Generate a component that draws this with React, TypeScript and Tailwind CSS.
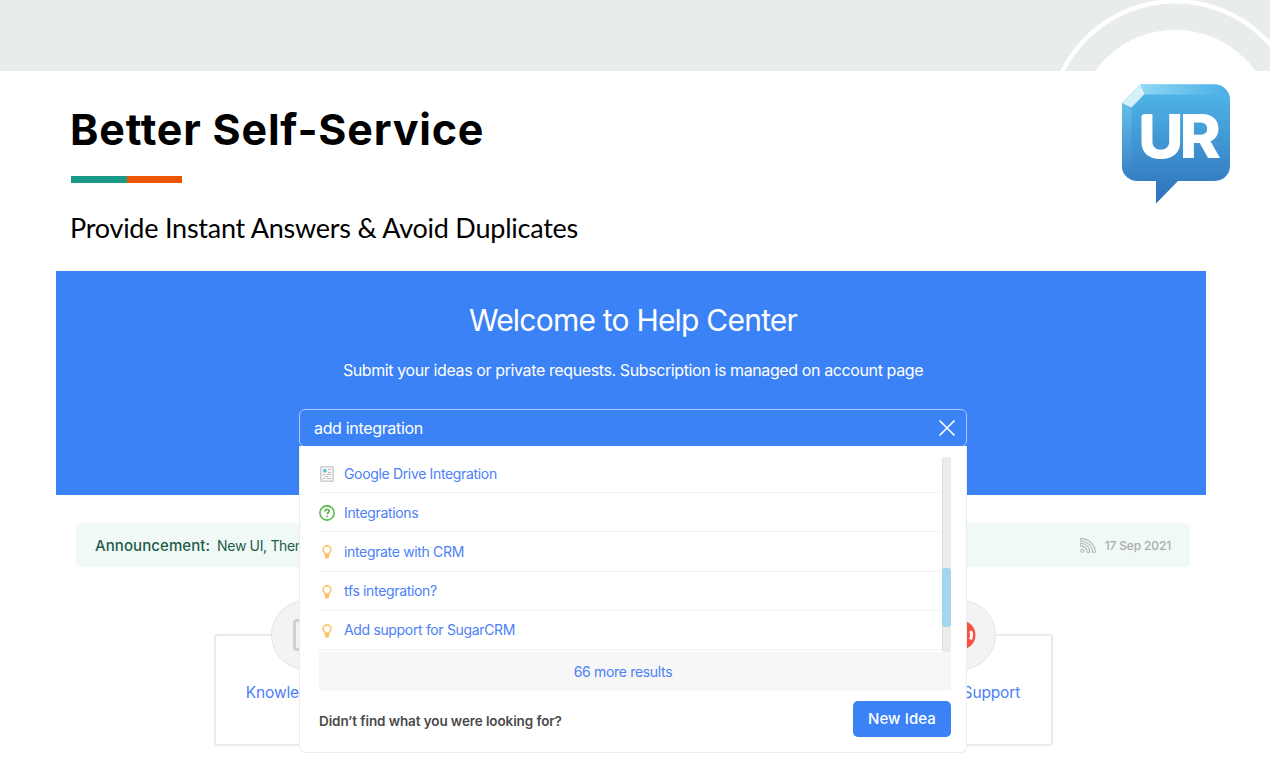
import React from 'react';

type ResultKind = 'article' | 'question' | 'idea';

interface Result {
    kind: ResultKind;
    title: string;
}

const results: Result[] = [
    { kind: 'article', title: 'Google Drive Integration' },
    { kind: 'question', title: 'Integrations' },
    { kind: 'idea', title: 'integrate with CRM' },
    { kind: 'idea', title: 'tfs integration?' },
    { kind: 'idea', title: 'Add support for SugarCRM' },
];

const ArticleIcon: React.FC<{ className?: string }> = ({ className }) => (
    <svg viewBox="0 0 14 16" className={className} fill="none">
        <rect x="0.8" y="0.8" width="12.4" height="14.4" rx="1" fill="#f4f4f4" stroke="#cfcfcf" strokeWidth="1.6" />
        <circle cx="4.9" cy="4.8" r="1.7" fill="#4db1e2" />
        <path d="M8 3.5h3M8 6.5h3M3 8.5h2M7 8.5h4M5 10.5h3M3 12.5h2M7 12.5h4" stroke="#c0c0c0" strokeWidth="1" />
    </svg>
);

const QuestionIcon: React.FC<{ className?: string }> = ({ className }) => (
    <svg viewBox="0 0 16 16" className={className} fill="none" stroke="#55b94c">
        <circle cx="8" cy="8" r="7.1" strokeWidth="1.6" />
        <path d="M5.9 6.4c0-1.3.9-2 2.1-2s2.1.8 2.1 1.8c0 1.5-1.9 1.5-1.9 3.1" strokeWidth="1.8" />
        <circle cx="8.1" cy="11.3" r="0.5" fill="#55b94c" strokeWidth="1" />
    </svg>
);

const BulbIcon: React.FC<{ className?: string }> = ({ className }) => (
    <svg viewBox="0 0 10 14" className={className} fill="none" stroke="#fcc670">
        <path d="M3.3 9.4C3.2 7.7 1 7.2 1 4.8 1 2.5 2.8.9 5 .9s4 1.6 4 3.9c0 2.4-2.2 2.9-2.3 4.6z" strokeWidth="1.6" />
        <path d="M3 8.8h4v3.4L6.1 13.6H3.9L3 12.2z" fill="#fbbf5c" stroke="none" />
    </svg>
);

const RssIcon: React.FC<{ className?: string }> = ({ className }) => (
    <svg viewBox="0 0 16 15" className={className} fill="none" stroke="#b4bab8" strokeWidth="1.1">
        <circle cx="2.3" cy="12.7" r="1.6" />
        <path d="M.7 7.9V5.2c5.2 0 9.1 3.9 9.1 9.1H7.2C7.2 10.7 4.3 7.9.7 7.9z" />
        <path d="M.7 3.2V.6c7.9 0 14.6 5.8 14.6 13.7h-2.7C12.6 8.1 7.3 3.2.7 3.2z" />
    </svg>
);

const resultIcons: Record<ResultKind, React.ReactNode> = {
    article: <ArticleIcon className="w-[14px] h-4" />,
    question: <QuestionIcon className="w-4 h-4 shrink-0" />,
    idea: <BulbIcon className="w-[10px] h-[14px]" />,
};

const Logo: React.FC = () => (
    <svg viewBox="0 0 110 120" className="w-[110px] h-[120px]">
        <defs>
            <linearGradient id="body" x1="0" y1="0" x2="0" y2="1">
                <stop offset="0" stopColor="#52b9ea" />
                <stop offset="0.8" stopColor="#357fc4" />
                <stop offset="1" stopColor="#2f70b8" />
            </linearGradient>
            <linearGradient id="top" x1="0" y1="0" x2="1" y2="0">
                <stop offset="0" stopColor="#8fd7f3" />
                <stop offset="1" stopColor="#4aaee6" />
            </linearGradient>
            <linearGradient id="side" x1="0" y1="0" x2="0" y2="1">
                <stop offset="0" stopColor="#66bfe8" />
                <stop offset="1" stopColor="#357fc4" />
            </linearGradient>
        </defs>
        <path d="M19.5.5H94a15 15 0 0 1 15 15V82a15 15 0 0 1-15 15H57L35 119.5V97H16.5A15 15 0 0 1 1 82V19z" fill="url(#body)" />
        <path d="M19.5.5H94a15 15 0 0 1 13 10H23z" fill="url(#top)" />
        <path d="M1 19l9.5 4.5V95.5A15 15 0 0 1 1 82z" fill="url(#side)" />
        <path d="M19.5.8L23.5 10 10.5 23.5 1 19z" fill="#d8f0f9" />
        <text
            x="17"
            y="74"
            fill="#fff"
            fontFamily="Inter, sans-serif"
            fontWeight="800"
            fontSize="61"
            letterSpacing="-4"
            textLength="79"
            lengthAdjust="spacingAndGlyphs"
        >
            UR
        </text>
        <path d="M18 28h7l-7 6z" fill="#4aa8df" />
    </svg>
);

const SlideHeader: React.FC = () => (
    <header className="relative h-[71px] bg-[#e8eced] overflow-hidden">
        <svg viewBox="0 0 230 71" className="absolute right-0 top-0 w-[230px] h-[71px]">
            <circle cx="135.3" cy="127.3" r="126" fill="none" stroke="#fff" strokeWidth="4.4" />
            <circle cx="135.3" cy="128.5" r="98.7" fill="#fff" />
        </svg>
    </header>
);

const SearchDropdown: React.FC = () => (
    <div className="absolute z-10 left-0 top-[37px] w-[668px] h-[307px] bg-white border border-[#ececec] border-t-0 rounded-b-md pl-[19px] pr-[15px]">
        <div className="relative h-[205px] pt-[8px]">
            <ul>
                {results.map(r => (
                    <li key={r.title} className="flex items-center h-[39.2px] border-b border-[#f3f3f3]">
                        <span className="flex justify-center w-[15px] pt-[2px] mr-[10px]">{resultIcons[r.kind]}</span>
                        <a className="text-[14px] tracking-[-0.34px] text-[#4c80f7]">{r.title}</a>
                    </li>
                ))}
            </ul>
            <div className="absolute right-0 top-[11px] w-[9px] h-[195px] rounded-[3px] bg-[#ebebeb] border-l border-[#dedede]">
                <div className="absolute -left-px top-[111px] w-[9px] h-[59px] rounded-[3px] bg-[#a3d5ee]" />
            </div>
        </div>
        <div className="flex items-center justify-center h-[39px] mt-px pr-[24px] bg-[#f7f7f7] text-[14px] tracking-[-0.32px] text-[#4c80f7]">66 more results</div>
        <div className="flex items-center justify-between h-[56px]">
            <span className="text-[13.5px] tracking-[-0.1px] font-semibold text-[#4a4a4a] pt-[5px]">Didn’t find what you were looking for?</span>
            <button className="w-[98px] h-[36px] rounded-[5px] bg-[#3b82f6] text-white text-[15px] tracking-[0.1px] font-medium pt-px">New Idea</button>
        </div>
    </div>
);

const HelpCenterHero: React.FC = () => (
    <section className="flex flex-col items-center h-[224px] bg-[#3b82f6] text-white pl-1">
        <h2 className="mt-[29px] text-[30px] leading-[40px] tracking-[-0.78px] font-normal whitespace-nowrap">Welcome to Help Center</h2>
        <p className="mt-[18px] text-[16px] leading-[24px] tracking-[-0.39px] whitespace-nowrap">Submit your ideas or private requests. Subscription is managed on account page</p>
        <div className="relative w-[668px] h-[38px] mt-[27px]">
            <div className="flex items-center justify-between h-[38px] border border-[#a9c9fb] rounded-md pl-[14px] pr-[11px]">
                <span className="text-[16px] tracking-[-0.33px]">add integration</span>
                <svg viewBox="0 0 16 16" className="w-4 h-4" stroke="#fff" strokeWidth="1.7" strokeLinecap="round">
                    <path d="M1 1l14 14M15 1L1 15" />
                </svg>
            </div>
            <SearchDropdown />
        </div>
    </section>
);

const Announcement: React.FC = () => (
    <div className="flex items-center h-[44px] mt-[28px] ml-5 mr-4 px-[19px] pt-px rounded-[5px] bg-[#f1f9f6] text-[#1f5c4c] whitespace-nowrap">
        <span className="text-[15px] tracking-[0.08px] font-medium pt-px">Announcement:</span>
        <span className="ml-[7px] text-[14px] tracking-[-0.34px]">New UI, Themes</span>
        <RssIcon className="ml-auto w-4 h-[15px]" />
        <time className="ml-[9px] text-[12px] tracking-[-0.15px] font-medium text-[#a9adab] pt-px">17 Sep 2021</time>
    </div>
);

interface TileProps {
    label: string;
    children: React.ReactNode;
}

const Tile: React.FC<TileProps> = ({ label, children }) => (
    <div className="relative flex justify-center w-[184px] rounded-[3px] border-2 border-[#ebebeb] pt-[45px]">
        <div className="absolute left-[55px] -top-[36px] flex items-center justify-center w-[70px] h-[70px] rounded-full bg-[#f3f3f3] border border-[#e4e4e4]">
            {children}
        </div>
        <span className="text-[15.5px] tracking-[-0.15px] text-[#4c80f7] whitespace-nowrap">{label}</span>
    </div>
);

const Tiles: React.FC = () => (
    <div className="flex justify-between w-[839px] h-[112px] mt-[67px] ml-[158px]">
        <Tile label="Knowledge Base">
            <div className="w-[26px] h-8 rounded-[4px] border-[3px] border-[#d0d0d0]" />
        </Tile>
        <Tile label="Contact Support">
            <svg viewBox="0 0 32 32" className="w-8 h-8">
                <circle cx="16" cy="16" r="14.5" fill="#fb4f43" />
                <circle cx="16" cy="16" r="10.5" fill="none" stroke="#fff" strokeWidth="3" strokeDasharray="9.2 7.3" strokeDashoffset="4.6" />
                <circle cx="16" cy="16" r="6" fill="#f3f3f3" />
            </svg>
        </Tile>
    </div>
);

const App: React.FC = () => (
    <div className="w-[1270px] h-[760px] overflow-hidden bg-white font-['Inter',sans-serif]">
        <SlideHeader />
        <div className="flex justify-between h-[200px] pl-[71px] pr-[39px]">
            <div>
                <h1 className="mt-[32px] -ml-px text-[43px] leading-[52px] tracking-[0.8px] font-bold text-black whitespace-nowrap">Better Self-Service</h1>
                <div className="flex w-[111px] h-[7px] mt-[21px]">
                    <div className="w-[56px] bg-[#1a9988]" />
                    <div className="w-[55px] bg-[#eb5600]" />
                </div>
                <p className="mt-[27px] -ml-px text-[27px] leading-[36px] tracking-[-0.24px] text-black font-['Lato',sans-serif] whitespace-nowrap">Provide Instant Answers &amp; Avoid Duplicates</p>
            </div>
            <div className="pt-[13px]">
                <Logo />
            </div>
        </div>
        <main className="ml-[56px] w-[1150px]">
            <HelpCenterHero />
            <Announcement />
            <Tiles />
        </main>
    </div>
);

export default App;
